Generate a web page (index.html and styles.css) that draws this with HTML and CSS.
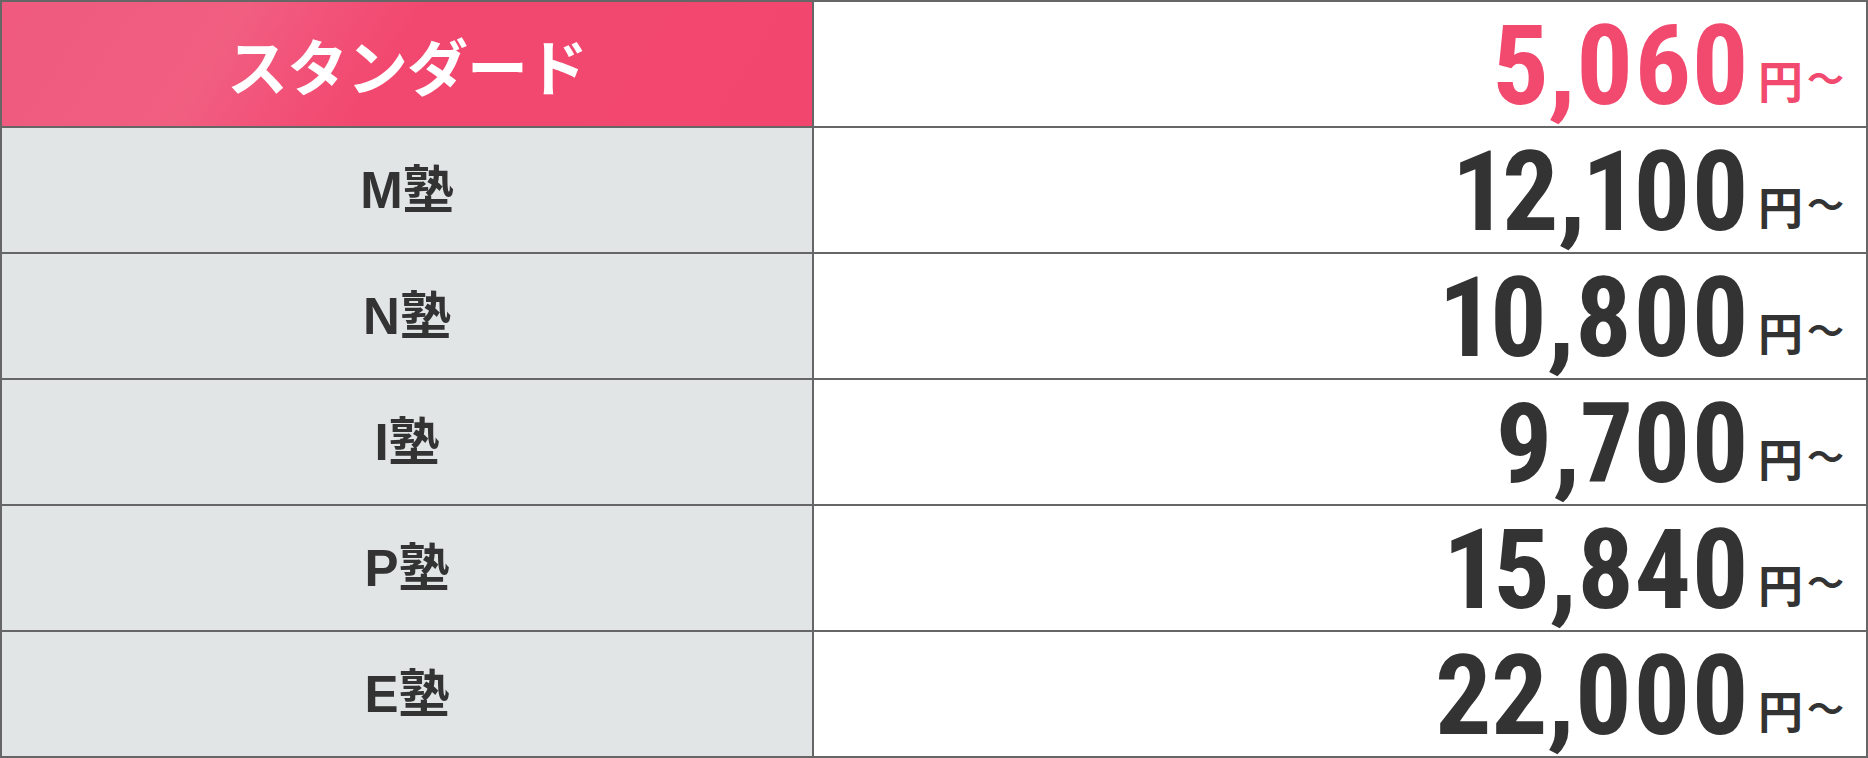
FILE: index.html
```html
<!DOCTYPE html>
<html lang="ja">
<head>
<meta charset="utf-8">
<title>料金表</title>
<link rel="stylesheet" href="styles.css">
</head>
<body>
<div class="price-table">
  <div class="cell label label--featured">スタンダード</div>
  <div class="cell price price--featured"><span class="num">5,060</span><span class="unit">円</span><span class="from">〜</span></div>

  <div class="cell label">M塾</div>
  <div class="cell price"><span class="num">12,100</span><span class="unit">円</span><span class="from">〜</span></div>

  <div class="cell label">N塾</div>
  <div class="cell price"><span class="num">10,800</span><span class="unit">円</span><span class="from">〜</span></div>

  <div class="cell label">I塾</div>
  <div class="cell price"><span class="num">9,700</span><span class="unit">円</span><span class="from">〜</span></div>

  <div class="cell label">P塾</div>
  <div class="cell price"><span class="num">15,840</span><span class="unit">円</span><span class="from">〜</span></div>

  <div class="cell label">E塾</div>
  <div class="cell price"><span class="num">22,000</span><span class="unit">円</span><span class="from">〜</span></div>
</div>
</body>
</html>
```
FILE: styles.css
```css
html, body {
  margin: 0;
  padding: 0;
  background: #ffffff;
}

.price-table {
  display: grid;
  grid-template-columns: 810px 1fr;
  grid-auto-rows: 124px;
  gap: 2px;
  padding: 2px;
  background: #666666;
  width: 1868px;
  box-sizing: border-box;
}

.cell {
  display: flex;
  align-items: center;
}

.label {
  justify-content: center;
  background: #e1e5e6;
  color: #333333;
  font-family: "Liberation Sans", "Noto Sans CJK JP", sans-serif;
  font-weight: 700;
  font-size: 51px;
  line-height: 1;
}

.label--featured {
  background: linear-gradient(122deg, #ef5a7e 0%, #f05e80 28%, #f2547a 36%, #f2486f 48%, #f2466f 100%);
  color: #ffffff;
  font-family: "Noto Sans CJK JP", sans-serif;
  font-size: 61px;
  letter-spacing: -1px;
}

.price {
  justify-content: flex-end;
  align-items: baseline;
  padding: 12px 22px 0 0;
  background: #ffffff;
  color: #333333;
  line-height: 1;
  flex-wrap: nowrap;
}

.price .num {
  font-family: "Roboto Condensed", "Roboto", sans-serif;
  font-weight: 700;
  font-size: 112px;
  font-variant-numeric: proportional-nums;
  letter-spacing: -0.5px;
  line-height: 104px;
}

.price .unit {
  font-family: "Noto Sans CJK JP", sans-serif;
  font-weight: 700;
  font-size: 45px;
  margin-left: 9px;
  position: relative;
  top: -5px;
}

.price .from {
  font-family: "Noto Sans CJK JP", sans-serif;
  font-weight: 700;
  font-size: 37px;
  margin-left: 4px;
  position: relative;
  top: -11px;
}

.price--featured {
  color: #f2496f;
}
```
